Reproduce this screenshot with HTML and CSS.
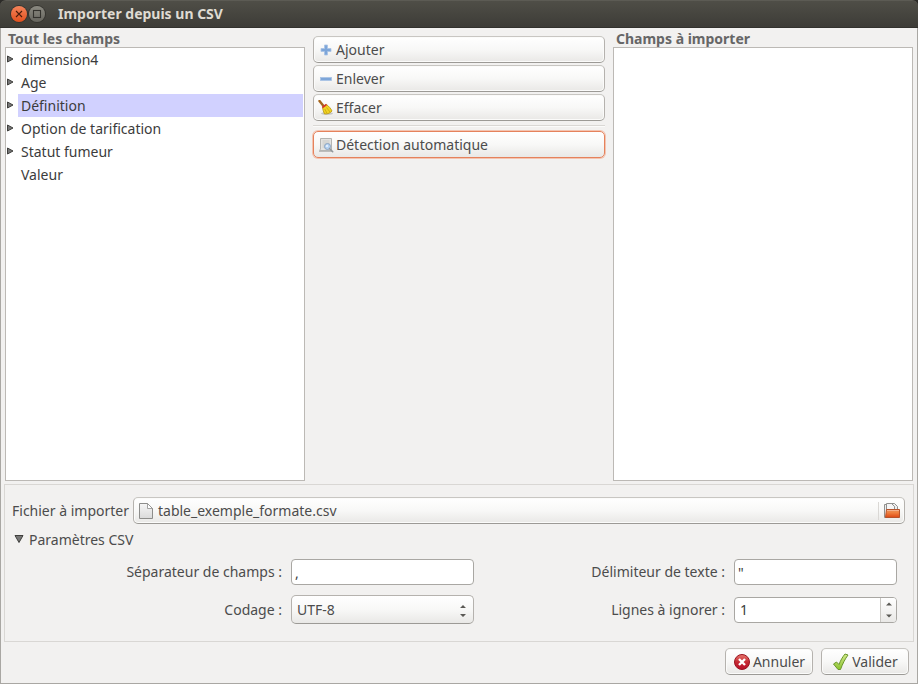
FILE: index.html
```html
<!DOCTYPE html>
<html lang="fr">
<head>
<meta charset="utf-8">
<meta name="viewport" content="width=device-width, initial-scale=1">
<title>Importer depuis un CSV</title>
<link rel="stylesheet" href="styles.css">
</head>
<body>
<div class="window">
  <header class="titlebar">
    <button class="winbtn winbtn-close" type="button" aria-label="Fermer">
      <svg viewBox="0 0 16 16" width="16" height="16"><path d="M5 5l6 6M11 5l-6 6" stroke="#4a1d0c" stroke-width="1.1" fill="none"/></svg>
    </button>
    <button class="winbtn" type="button" aria-label="Agrandir">
      <svg viewBox="0 0 16 16" width="16" height="16"><rect x="4.500" y="4.500" width="7" height="7" stroke="#33322d" stroke-width="1.1" fill="none"/></svg>
    </button>
    <h1 class="title">Importer depuis un CSV</h1>
  </header>

  <main class="content">
    <section class="fields">
      <h2 class="list-title">Tout les champs</h2>
      <ul class="list">
        <li class="item"><svg class="arrow" viewBox="0 0 8 8"><path d="M.5 1v6L6 4z"/></svg><span class="item-name">dimension4</span></li>
        <li class="item"><svg class="arrow" viewBox="0 0 8 8"><path d="M.5 1v6L6 4z"/></svg><span class="item-name">Age</span></li>
        <li class="item"><svg class="arrow" viewBox="0 0 8 8"><path d="M.5 1v6L6 4z"/></svg><span class="item-name selected">Définition</span></li>
        <li class="item"><svg class="arrow" viewBox="0 0 8 8"><path d="M.5 1v6L6 4z"/></svg><span class="item-name">Option de tarification</span></li>
        <li class="item"><svg class="arrow" viewBox="0 0 8 8"><path d="M.5 1v6L6 4z"/></svg><span class="item-name">Statut fumeur</span></li>
        <li class="item"><span class="arrow"></span><span class="item-name">Valeur</span></li>
      </ul>
    </section>

    <section class="actions">
      <button class="btn" type="button">
        <svg viewBox="0 0 16 16" width="16" height="16"><path d="M6.500 3h3v3.500H13v3H9.500V13h-3V9.500H3v-3h3.500z" fill="#7da6d9" stroke="#a9c3e4" stroke-width=".8"/></svg>
        Ajouter
      </button>
      <button class="btn" type="button">
        <svg viewBox="0 0 16 16" width="16" height="16"><rect x="2.500" y="6.500" width="11" height="3" fill="#7da6d9" stroke="#a9c3e4" stroke-width=".8"/></svg>
        Enlever
      </button>
      <button class="btn" type="button">
        <svg viewBox="0 0 16 16" width="16" height="16">
          <ellipse cx="9" cy="13.500" rx="6" ry="1.500" fill="#aaa" opacity=".6"/>
          <path d="M1.500 1l4 5" stroke="#a5651c" stroke-width="2.400" stroke-linecap="round"/>
          <path d="M8.500 4.500c2 1.500 4.500 4 5.500 6.500-1.500 2-4 3-7.500 3C5.500 12 4.800 9.500 4.500 7.500z" fill="#f0d322" stroke="#b8960b" stroke-width=".8"/>
          <path d="M8.500 7.500l3.500 4.500M6.800 9l2 4" stroke="#c9a40e" stroke-width=".8"/>
          <path d="M4.300 7.500l4.200-3" stroke="#d4352a" stroke-width="1.600"/>
        </svg>
        Effacer
      </button>
      <hr class="rule">
      <button class="btn btn-focus" type="button">
        <svg viewBox="0 0 16 16" width="16" height="16">
          <path d="M2.500 1.500h11v12H1.500L2.500 12z" fill="#e3e3e1" stroke="#b4b5b3"/>
          <path d="M1 14.500h13" stroke="#bdbdbb"/>
          <path d="M4.500 4h7M4.500 6h7M4.500 8h3M4.500 10h2" stroke="#c4c5c2" stroke-width=".9"/>
          <circle cx="9.500" cy="9.500" r="3" fill="#b5d2f2" stroke="#8aa3c0"/>
          <circle cx="9" cy="9" r="1" fill="#eef6ff"/>
          <path d="M11.700 11.700l3 3" stroke="#92989c" stroke-width="1.600" stroke-linecap="round"/>
        </svg>
        Détection automatique
      </button>
    </section>

    <section class="fields">
      <h2 class="list-title">Champs à importer</h2>
      <ul class="list"></ul>
    </section>
  </main>

  <section class="panel">
    <div class="file-row">
      <label for="file">Fichier à importer</label>
      <button class="btn file-btn" id="file" type="button">
        <svg viewBox="0 0 16 18" width="16" height="18">
          <defs><linearGradient id="paper" x2="0" y2="1"><stop offset="0" stop-color="#f6f6f6"/><stop offset="1" stop-color="#dadada"/></linearGradient></defs>
          <path d="M1.500 1.500h8l5 5v10h-13z" fill="url(#paper)" stroke="#8d8d8b"/>
          <path d="M9.500 1.500v5h5z" fill="#fff" stroke="#8d8d8b" stroke-width=".8"/>
        </svg>
        <span class="file-name">table_exemple_formate.csv</span>
        <span class="file-open">
          <svg viewBox="0 0 18 18" width="18" height="18">
            <defs><linearGradient id="folder" x2="0" y2="1"><stop offset="0" stop-color="#e9955f"/><stop offset=".4" stop-color="#f0803f"/><stop offset="1" stop-color="#dd4814"/></linearGradient></defs>
            <path d="M1.500 15.500v-13h3v13z" fill="#eee" stroke="#90908e"/>
            <path d="M3.500 8V1.500h6l2 2V8z" fill="#f5f5f5" stroke="#90908e"/>
            <path d="M8.500 1.500h3l3 3V8h-3V4.500z" fill="#eee" stroke="#90908e"/>
            <path d="M3.500 7.500h13v8h-14z" fill="url(#folder)" stroke="#b5522b"/>
            <path d="M4 8.500h12" stroke="#f4b08c"/>
          </svg>
        </span>
      </button>
    </div>

    <details class="params" open>
      <summary class="params-title">
        <svg viewBox="0 0 10 10" width="10" height="10"><path d="M1 .5h8L5 7.500z" fill="#777" stroke="#3f3f3c"/></svg>
        Paramètres CSV
      </summary>
      <div class="params-grid">
        <label for="sep">Séparateur de champs :</label>
        <input class="entry" id="sep" type="text" value=",">
        <label for="delim">Délimiteur de texte :</label>
        <input class="entry" id="delim" type="text" value="&quot;">
        <label for="enc">Codage :</label>
        <div class="combo">
          <select class="combo-select" id="enc"><option>UTF-8</option></select>
          <svg class="combo-arrows" viewBox="0 0 8 14" width="8" height="14"><path d="M1 5l3-3 3 3zM1 11l3 3 3-3z" fill="#5a5955"/></svg>
        </div>
        <label for="skip">Lignes à ignorer :</label>
        <div class="spin">
          <input class="spin-input" id="skip" type="number" value="1">
          <div class="spin-btns">
            <button class="spin-btn" type="button" aria-label="Augmenter"><svg viewBox="0 0 6 4" width="6" height="4"><path d="M0 3.500L3 .5l3 3z" fill="#5a5955"/></svg></button>
            <button class="spin-btn" type="button" aria-label="Diminuer"><svg viewBox="0 0 6 4" width="6" height="4"><path d="M0 .5l3 3 3-3z" fill="#5a5955"/></svg></button>
          </div>
        </div>
      </div>
    </details>
  </section>

  <footer class="footer">
    <button class="btn btn-dialog" type="button">
      <svg viewBox="0 0 18 18" width="18" height="18">
        <defs><linearGradient id="red" x2="0" y2="1"><stop offset="0" stop-color="#e8796f"/><stop offset=".5" stop-color="#c62a33"/><stop offset="1" stop-color="#b80f2a"/></linearGradient></defs>
        <circle cx="9" cy="9" r="7.500" fill="url(#red)" stroke="#9b1420"/>
        <path d="M6 6l6 6M12 6l-6 6" stroke="#fff" stroke-width="2.400"/>
      </svg>
      Annuler
    </button>
    <button class="btn btn-dialog" type="button">
      <svg viewBox="0 0 18 18" width="18" height="18">
        <defs><linearGradient id="green" x2="0" y2="1"><stop offset="0" stop-color="#d3ea8b"/><stop offset="1" stop-color="#8bc32f"/></linearGradient></defs>
        <path d="M1.500 11l3-2 2.500 2.500C8.500 7.500 10.500 4 13 1l3 1C13 6 10.500 11 8.500 16.500H6z" fill="url(#green)" stroke="#6a962c" stroke-linejoin="round"/>
      </svg>
      Valider
    </button>
  </footer>
</div>
</body>
</html>
```
FILE: styles.css
```css
* {
  box-sizing: border-box;
}

body {
  margin: 0;
  background: #2c2b28;
  color: #4c4c4c;
  font: 14px/20px "Noto Sans", "Open Sans", sans-serif;
}

button,
input,
select {
  margin: 0;
  font: inherit;
  color: inherit;
}

svg {
  display: block;
  flex: none;
}

.window {
  display: flex;
  flex-direction: column;
  min-height: 100vh;
}

.titlebar {
  display: flex;
  align-items: center;
  gap: 2px;
  height: 28px;
  padding-left: 11px;
  border-top: 1px solid #5c5b54;
  border-bottom: 1px solid #32312d;
  border-radius: 6px 6px 0 0;
  background: linear-gradient(#4f4e47, #3d3c37);
}

.winbtn {
  width: 16px;
  height: 16px;
  padding: 0;
  border: 0;
  border-radius: 50%;
  background: linear-gradient(#8b8a81, #66655e);
  box-shadow: 0 0 0 1px #35342f;
}

.winbtn-close {
  background: linear-gradient(#f4845a, #e2501e);
}

.title {
  margin: 0 0 0 11px;
  color: #dfdbd2;
  font-size: 14px;
  line-height: 20px;
}

.content {
  display: grid;
  grid-template-columns: minmax(0, 300fr) minmax(0, 292fr) minmax(0, 300fr);
  gap: 8px;
  flex: 1;
  padding: 0 4px 3px;
  border: solid #a9a7a3;
  border-width: 0 1px;
  background: #f2f1f0;
}

.fields {
  display: flex;
  flex-direction: column;
}

.list-title {
  margin: 0;
  padding: 2px 3px 0;
  color: #666;
  font-size: 14px;
  line-height: 17px;
}

.list {
  flex: 1;
  margin: 0;
  padding: 0 1px;
  border: 1px solid #bcb9b5;
  background: #fff;
  list-style: none;
  color: #3c3c3c;
}

.item {
  display: flex;
  height: 23px;
}

.arrow {
  width: 8px;
  height: 8px;
  margin: 7px 3px 0 0;
  fill: #777;
  stroke: #3f3f3c;
}

.item-name {
  flex: 1;
  padding: 0 3px;
  line-height: 23px;
}

.selected {
  background: #d1d1ff;
}

.actions {
  display: flex;
  flex-direction: column;
  gap: 2px;
  padding-top: 8px;
}

.btn {
  display: flex;
  align-items: center;
  gap: 2px;
  height: 27px;
  padding: 0 4px;
  border: 1px solid #b5b2ae;
  border-top-color: #c8c6c2;
  border-bottom-color: #9c9a96;
  border-radius: 5px;
  background: linear-gradient(#fff, #f8f8f7 50%, #e9e8e6);
  box-shadow: inset 0 0 0 1px #fbfbfa;
  text-align: left;
  white-space: nowrap;
}

.btn-focus {
  border-color: #e5825c;
  box-shadow: 0 0 0 1px #f3c4b1;
}

.rule {
  width: 100%;
  height: 2px;
  margin: 2px 0;
  border: 0;
  border-top: 1px solid #dad8d5;
  background: #fbfbfa;
}

.panel {
  padding: 0 4px;
  border: solid #a9a7a3;
  border-width: 0 1px;
  background: #f2f1f0;
}

.panel::before,
.panel::after {
  content: "";
  display: block;
  height: 12px;
  margin: 0 -1px;
  border: 1px solid #d9d7d4;
  border-bottom: 0;
}

.panel::after {
  height: 17px;
  border-top: 0;
  border-bottom: 1px solid #d9d7d4;
}

.file-row {
  display: flex;
  align-items: center;
  gap: 4px;
  margin: 0 -1px;
  padding: 0 8px 0 7px;
  border: solid #d9d7d4;
  border-width: 0 1px;
}

.file-btn {
  flex: 1;
  padding-right: 3px;
}

.file-name {
  flex: 1;
  padding-left: 2px;
}

.file-open {
  padding-left: 4px;
  border-left: 1px solid #dad8d5;
}

.params {
  margin: 0 -1px;
  padding: 6px 16px 0 7px;
  border: solid #d9d7d4;
  border-width: 0 1px;
}

.params-title {
  display: flex;
  align-items: center;
  gap: 5px;
  padding-left: 2px;
  list-style: none;
}

.params-grid {
  display: grid;
  grid-template-columns: minmax(0, 270fr) minmax(0, 183fr) minmax(0, 242fr) minmax(0, 163fr);
  align-items: center;
  gap: 10px 9px;
  padding-top: 9px;
}

.params-grid label {
  text-align: right;
}

.entry,
.spin {
  width: 100%;
  height: 26px;
  border: 1px solid #a9a7a3;
  border-radius: 4px;
  background: #fff;
  color: #3c3c3c;
}

.entry {
  padding: 0 3px;
}

.combo {
  display: grid;
  align-items: center;
}

.combo-select {
  grid-area: 1 / 1;
  width: 100%;
  height: 29px;
  padding: 0 5px;
  border: 1px solid #b5b2ae;
  border-bottom-color: #9c9a96;
  border-radius: 5px;
  background: linear-gradient(#fff, #f8f8f7 50%, #e9e8e6);
  appearance: none;
}

.combo-arrows {
  grid-area: 1 / 1;
  justify-self: end;
  margin-right: 7px;
  pointer-events: none;
}

.spin {
  display: flex;
  overflow: hidden;
}

.spin-input {
  flex: 1;
  min-width: 0;
  padding: 0 5px;
  border: 0;
  background: none;
  appearance: textfield;
}

.spin-input::-webkit-inner-spin-button {
  appearance: none;
}

.spin-btns {
  display: flex;
  flex-direction: column;
  width: 16px;
  border-left: 1px solid #c8c6c2;
  background: linear-gradient(#fff, #e9e8e6);
}

.spin-btn {
  display: grid;
  flex: 1;
  place-items: center;
  padding: 0;
  border: 0;
  background: none;
}

.footer {
  display: flex;
  justify-content: flex-end;
  gap: 8px;
  padding: 6px 8px 8px;
  border: 1px solid #a9a7a3;
  border-top: 0;
  background: #f2f1f0;
}

.btn-dialog {
  justify-content: center;
  width: 88px;
}
```
